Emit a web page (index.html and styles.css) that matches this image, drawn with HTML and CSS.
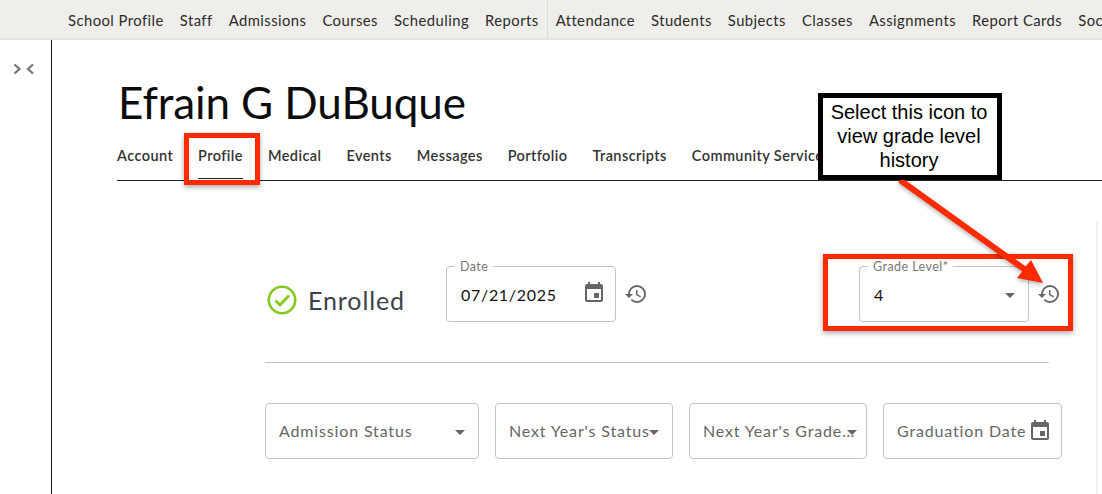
FILE: index.html
```html
<!DOCTYPE html>
<html lang="en">
<head>
<meta charset="utf-8">
<title>Efrain G DuBuque</title>
<link rel="stylesheet" href="styles.css">
</head>
<body>
<nav class="topnav">
  <div class="navgroup navgroup-first">
    <a>School Profile</a><a>Staff</a><a>Admissions</a><a>Courses</a><a>Scheduling</a><a>Reports</a>
  </div>
  <div class="navgroup">
    <a>Attendance</a><a>Students</a><a>Subjects</a><a>Classes</a><a>Assignments</a><a>Report Cards</a><a>Social</a>
  </div>
</nav>
<div class="shell">
  <aside class="sidebar">
    <svg class="collapse" width="22" height="12" viewBox="0 0 22 12"><path d="M1.500 1.500 6.500 6l-5 4.500M20 1.500 15 6l5 4.500" fill="none" stroke="#777" stroke-width="2.300"/></svg>
  </aside>
  <main class="content">
    <h1 class="name">Efrain G DuBuque</h1>
    <div class="tabs">
      <a>Account</a><a class="active">Profile</a><a>Medical</a><a>Events</a><a>Messages</a><a>Portfolio</a><a>Transcripts</a><a>Community Service</a>
    </div>
    <section class="panel">
      <div class="row-top">
        <div class="status">
          <svg width="30" height="30" viewBox="0 0 30 30"><circle cx="15" cy="15" r="13.200" fill="none" stroke="#84c91c" stroke-width="2.600"/><path d="M8.500 15.500 13 20l9-9.500" fill="none" stroke="#84c91c" stroke-width="2.800"/></svg>
          <span>Enrolled</span>
        </div>
        <div class="field field-date">
          <span class="legend">Date</span>
          <span class="value">07/21/2025</span>
          <svg class="cal" width="24" height="24" viewBox="0 0 24 24"><path fill="#666" d="M17 12h-5v5h5v-5zM16 1v2H8V1H6v2H5c-1.110 0-1.990.9-1.990 2L3 19c0 1.100.89 2 2 2h14c1.100 0 2-.9 2-2V5c0-1.100-.9-2-2-2h-1V1h-2zm3 18H5V8h14v11z"/></svg>
        </div>
        <svg class="history history-date" width="24" height="24" viewBox="0 0 24 24"><path fill="#666" d="M13 3a9 9 0 0 0-9 9H1l3.890 3.890.07.14L9 12H6c0-3.870 3.130-7 7-7s7 3.130 7 7-3.130 7-7 7c-1.930 0-3.680-.79-4.940-2.060l-1.420 1.420A8.954 8.954 0 0 0 13 21a9 9 0 0 0 0-18zm-1 5v5l4.280 2.540.72-1.210-3.500-2.080V8H12z"/></svg>
        <div class="field field-grade">
          <span class="legend">Grade Level*</span>
          <span class="value">4</span>
          <i class="caret"></i>
        </div>
        <svg class="history" width="24" height="24" viewBox="0 0 24 24"><path fill="#666" d="M13 3a9 9 0 0 0-9 9H1l3.890 3.890.07.14L9 12H6c0-3.870 3.130-7 7-7s7 3.130 7 7-3.130 7-7 7c-1.930 0-3.680-.79-4.940-2.060l-1.420 1.420A8.954 8.954 0 0 0 13 21a9 9 0 0 0 0-18zm-1 5v5l4.280 2.540.72-1.210-3.500-2.080V8H12z"/></svg>
      </div>
      <hr class="rule">
      <div class="row-bottom">
        <div class="field field-a"><span class="placeholder">Admission Status</span><i class="caret"></i></div>
        <div class="field field-b"><span class="placeholder">Next Year's Status</span><i class="caret caret-tight"></i></div>
        <div class="field field-c"><span class="placeholder">Next Year's Grade…</span><i class="caret caret-over"></i></div>
        <div class="field field-d"><span class="placeholder">Graduation Date</span>
          <svg class="cal cal-tight" width="24" height="24" viewBox="0 0 24 24"><path fill="#666" d="M17 12h-5v5h5v-5zM16 1v2H8V1H6v2H5c-1.110 0-1.990.9-1.990 2L3 19c0 1.100.89 2 2 2h14c1.100 0 2-.9 2-2V5c0-1.100-.9-2-2-2h-1V1h-2zm3 18H5V8h14v11z"/></svg>
        </div>
      </div>
    </section>
  </main>
</div>
<div class="mark mark-tab"></div>
<div class="mark mark-grade"></div>
<svg class="arrow" width="170" height="120" viewBox="0 0 170 120"><path d="M11.750-.4 135.750 88.600 141 82 153 105 127 100 132.250 93.400 8.250 4.400z" fill="#ff2a00"/></svg>
<div class="callout">Select this icon to view grade level history</div>
</body>
</html>
```
FILE: styles.css
```css
* { box-sizing: border-box; }
html, body { margin: 0; height: 100%; overflow: hidden; }
body { background: #fff; font-family: Lato, "Noto Sans", sans-serif; color: #222; position: relative; }

.topnav { display: flex; height: 40px; background: #efeeea; border-bottom: 2px solid #e4e4e0; padding-left: 68px; overflow: hidden; white-space: nowrap; }
.navgroup { display: flex; gap: 16px; align-items: center; height: 38px; font-size: 14.800px; letter-spacing: .45px; color: #2b2b2b; padding-top: 2px; }
.navgroup-first { padding-right: 8px; border-right: 1px solid #dcdcd8; margin-right: 8px; }

.shell { display: flex; height: 454px; }
.sidebar { width: 52px; flex: none; border-right: 1px solid #111; padding: 23px 0 0 13px; }
.collapse { display: block; }

.content { flex: 1; min-width: 0; padding: 0 4px 0 65px; }
.name { margin: 32px 0 0 1px; font-size: 44px; line-height: 60px; font-weight: 400; color: #0c0c0c; letter-spacing: -.1px; }
.tabs { display: flex; gap: 25px; height: 49px; margin-right: -4px; border-bottom: 1px solid #222; padding-top: 15px; font-size: 14.500px; font-weight: 600; letter-spacing: .42px; color: #333; white-space: nowrap; }
.tabs a { display: block; height: 32px; line-height: 18px; }
.tabs .active { border-bottom: 1px solid #222; }

.panel { margin-top: 41px; padding: 44px 0 0 148px; border-right: 2px solid #efefef; height: 273px; }
.row-top { display: flex; align-items: flex-start; height: 96px; }
.status { display: flex; align-items: center; gap: 11px; width: 179px; height: 30px; margin-top: 19px; margin-left: 2px; flex: none; font-size: 25px; letter-spacing: .9px; color: #3c4249; }
.field { position: relative; display: flex; align-items: center; height: 56px; border: 1px solid #c4c4c4; border-radius: 4px; padding-left: 14px; flex: none; }
.legend { position: absolute; top: -7px; left: 8px; padding: 0 5px; background: #fff; font-size: 12.500px; line-height: 14px; letter-spacing: .45px; color: #777; white-space: nowrap; }
.value { font-size: 16px; letter-spacing: .7px; color: #111; }
.cal { position: absolute; right: 9px; top: 14px; }
.cal-tight { right: 9px; top: 15px; }
.history { flex: none; margin: 16px 0 0 8px; }
.history-date { margin-right: 211px; }
.field-date { width: 170px; }
.field-grade { width: 170px; }
.caret { position: absolute; right: 13px; top: 26px; width: 0; height: 0; border-left: 5px solid transparent; border-right: 5px solid transparent; border-top: 5px solid #666; }
.caret-tight { right: 13px; }
.caret-over { right: 9px; }

.rule { margin: 0; border: 0; border-top: 1px solid #bfc3c6; width: 784px; }
.row-bottom { display: flex; gap: 16px; margin-top: 40px; }
.placeholder { margin: 0 0 2px -1px; font-size: 16px; letter-spacing: .85px; color: #666; white-space: nowrap; }
.field-a { width: 214px; }
.field-b { width: 178px; }
.field-c { width: 178px; }
.field-d { width: 179px; }

.mark { position: absolute; border: 5px solid #ff2a00; box-shadow: 0 2px 5px rgba(0,0,0,.35); }
.mark-tab { left: 184px; top: 133px; width: 76px; height: 52px; }
.mark-grade { left: 823px; top: 254px; width: 250px; height: 77px; }
.arrow { position: absolute; left: 890px; top: 178px; filter: drop-shadow(0 2px 2px rgba(0,0,0,.3)); }
.callout { position: absolute; left: 818px; top: 93px; width: 184px; height: 87px; padding: 2px 9px 0 7px; border: 5px solid #000; background: #fff; font: 20px/24px "Liberation Sans", Arial, sans-serif; color: #000; text-align: center; }
```
